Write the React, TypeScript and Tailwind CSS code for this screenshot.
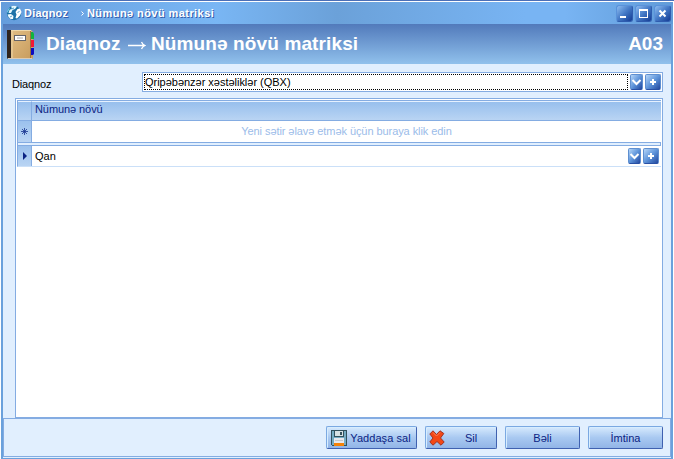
import type { ReactNode } from "react";

const glossy = "bg-linear-to-br from-[#b5d6f8] via-[#5e94da] to-[#24489f]";

function WindowButton({ children }: { children: ReactNode }) {
  return (
    <div className="h-[17px] w-[17px] rounded-[3px] border border-[#2f5cae] border-t-[#5a92da] border-l-[#5a92da] bg-linear-to-br from-[#8dbcf0] via-[#4479c6] to-[#153b94]">
      <svg width="15" height="15" viewBox="0 0 15 15" fill="none" stroke="#fff" shapeRendering="crispEdges">
        {children}
      </svg>
    </div>
  );
}

function EditorButtons() {
  return (
    <div className="flex shrink-0 gap-[2px]">
      <div className={`h-4 w-[13px] rounded-[2px] border border-[#5f8fd0] border-b-[#2850a5] ${glossy}`}>
        <svg width="11" height="14" viewBox="0 0 11 14" fill="none" stroke="#fff" strokeWidth="2">
          <path d="M1.5 5L5.5 9L9.5 5" />
        </svg>
      </div>
      <div className={`h-4 w-4 rounded-[2px] border border-[#5f8fd0] border-b-[#2850a5] ${glossy}`}>
        <svg width="14" height="14" viewBox="0 0 14 14" fill="#fff" shapeRendering="crispEdges">
          <path d="M6 4h2v2h2v2H8v2H6V8H4V6h2z" />
        </svg>
      </div>
    </div>
  );
}

function GlobeIcon() {
  return (
    <svg width="16" height="16" viewBox="0 0 16 16">
      <circle cx="8" cy="8" r="7.2" fill="#1c72a8" />
      <path d="M5 1.5Q8 0 11 1.5L9 4L6.5 5L5 8L2.5 8L3.5 5L6 3.5z" fill="#e4f7fd" />
      <path d="M11.5 4L14 3.5L15.5 7L14 10.5L11 13.5L9.5 13L10.5 9.5L9.5 7z" fill="#fff" />
      <path d="M1.5 9.5L5 9L7.5 11L7 14L4.5 14L2.5 12z" fill="#f2fbff" />
      <path d="M1 6L2.5 3.5L4 3L2.5 6L1 8z" fill="#73c5e5" />
      <path d="M5.5 4L8 3M11.5 8L13.5 6M4 12l2-1" stroke="#3a8fc0" strokeWidth=".8" />
    </svg>
  );
}

function BookIcon() {
  return (
    <svg width="28" height="31" viewBox="0 0 28 31">
      <defs>
        <linearGradient id="cover" x1="0" y1="0" x2="1" y2="1">
          <stop offset="0" stopColor="#e1bd84" />
          <stop offset="1" stopColor="#c79b5c" />
        </linearGradient>
      </defs>
      <path d="M0 1H4V30H1L0 29z" fill="#30241c" />
      <path d="M4 1H24L26 3V29L25 30H4z" fill="url(#cover)" />
      <path d="M4 1.5H24M5 2V29" stroke="#f0d8a9" fill="none" />
      <path d="M1 29.5H25" stroke="#dccbb4" />
      <path d="M23.5 2V29" stroke="#97713e" />
      <rect x="7" y="6" width="12" height="6" fill="#656468" />
      <rect x="8" y="7" width="10" height="4" fill="#fff" />
      <path d="M10 9H16" stroke="#a6a6a9" />
      <path d="M24 3h2l1 2v5h-3z" fill="#10b53c" />
      <path d="M24 11h3v7h-3z" fill="#f21835" />
      <path d="M24 19h3v6l-1 1h-2z" fill="#0c0cc0" />
    </svg>
  );
}

function SaveIcon() {
  return (
    <svg width="16" height="16" viewBox="0 0 16 16" shapeRendering="crispEdges">
      <path d="M0 0H15L16 1V16H1L0 15z" fill="#31515e" />
      <path d="M1 1H3V15H1zM13 1H15V15H13z" fill="#75acc4" />
      <path d="M3 7H13V8H3z" fill="#75acc4" />
      <path d="M4 1H12V6H4z" fill="#d7e2e5" />
      <path d="M9 2H11V5H9z" fill="#35535e" />
      <path d="M3 8H13V13H3z" fill="#e8e9ee" />
      <path d="M4 10H12V11H4z" fill="#c4c8ce" />
      <path d="M3 13H13V16H3z" fill="#f58208" />
    </svg>
  );
}

function DeleteIcon() {
  return (
    <svg width="16" height="16" viewBox="0 0 16 16">
      <path d="M4 .8L7.5 4.5L11 .8L14.8 3.5L11.5 8L15.2 12L12 15.2L8 11.5L4 15.2L.8 12L4 8L.8 4z" fill="#f34716" stroke="#a03222" strokeWidth="1" strokeLinejoin="round" />
      <path d="M4 2.5L7.5 6L11 2.5" stroke="#ff8055" fill="none" />
    </svg>
  );
}

function ActionButton({ width, children }: { width: string; children: ReactNode }) {
  return (
    <button className={`${width} flex h-[23px] items-center justify-center rounded-[2px] border border-t-[#7ba9e2] border-r-[#3f61b0] border-b-[#3f61b0] border-l-[#7ba9e2] bg-linear-to-b from-[#d7eafd] via-[#a9c9f1] to-[#92b5e7] text-[#0b2383] shadow-[inset_1px_1px_0_#d7edff]`}>
      {children}
    </button>
  );
}

export default function App() {
  return (
    <div className="flex h-[459px] w-[674px] flex-col overflow-hidden border-t border-[#4b6fb7] bg-white px-px font-['Liberation_Sans',Arial,sans-serif] text-[11px] leading-[14px] text-black">
      <div className="mt-px flex h-[22px] shrink-0 items-center bg-[linear-gradient(90deg,#659ddc_0%,#79b6f4_32%,#6ba1d9_50%,#78b4f3_78%,#78b4f3_84%,#619bd8_100%)] pr-[2px] pl-[5px]">
        <GlobeIcon />
        <h1 className="ml-[2px] flex whitespace-pre text-[11px] font-bold text-white [text-shadow:1px_1px_0_#365dab]">
          <span className="w-[57px] tracking-[0.2px]">Diaqnoz</span>
          <svg width="6" height="14" viewBox="0 0 6 14" fill="none" stroke="#fff"><path d="M.5 5.5L2.5 7.5L.5 9.5" /></svg>
          <span className="tracking-[0.43px]">Nümunə növü matriksi</span>
        </h1>
        <div className="ml-auto flex gap-[2px]">
          <WindowButton><path d="M3 11H9" strokeWidth="2" /></WindowButton>
          <WindowButton><path d="M3 4H12" strokeWidth="2" /><path d="M3.5 4V11.5H11.5V4" /></WindowButton>
          <WindowButton><path d="M4.5 4.5L10.5 10.5M10.5 4.5L4.5 10.5" strokeWidth="2" shapeRendering="auto" /></WindowButton>
        </div>
      </div>

      <div className="flex min-h-0 grow flex-col border-x-2 border-b border-[#6aa1dc] bg-[#e1effe]">
        <header className="flex h-10 shrink-0 items-center bg-linear-to-b from-[#527abb] to-[#91c1ec] pr-[8px] pl-[4px] text-white">
          <BookIcon />
          <h2 className="ml-[11px] flex items-center text-[19px] leading-6 font-bold whitespace-nowrap">
            <span className="w-[82px] tracking-[0.1px]">Diaqnoz</span>
            <svg width="18" height="12" viewBox="0 0 18 12" fill="none" stroke="#fff" strokeWidth="1.3"><path d="M0 7.5H17M13.5 4Q14.5 6.5 17 7.5Q14.5 8.5 13.5 11" /></svg>
            <span className="ml-[5px] tracking-[0.12px]">Nümunə növü matriksi</span>
          </h2>
          <span className="ml-auto text-[19px] font-bold">A03</span>
        </header>

        <div className="mt-2 flex h-5 shrink-0 pr-2 pl-[9px]">
          <label className="w-[130px] pt-[5px] tracking-[-0.15px]">Diaqnoz</label>
          <div className="flex grow border border-[#84ace2] bg-white p-px">
            <div className="mr-[2px] flex grow items-center border border-dotted border-black tracking-[-0.02px]">Qripəbənzər xəstəliklər (QBX)</div>
            <EditorButtons />
          </div>
        </div>

        <main className="mt-[6px] mr-2 ml-3 flex h-[321px] shrink-0 flex-col border border-b-2 border-[#84ace2] bg-white p-px text-[#0b2383]">
          <div className="flex h-[21px] shrink-0 border-y border-l border-[#84ace2]">
            <div className="w-[14px] border-t border-r border-t-[#e5f1ff] border-r-[#84ace2] bg-linear-to-b from-[#97bfed] to-[#b9d4f3]" />
            <div className="grow border-t border-[#e5f1ff] bg-linear-to-b from-[#97bfed] to-[#b9d4f3] pl-[3px] tracking-[-0.08px]">Nümunə növü</div>
          </div>
          <div className="flex h-[22px] shrink-0 border-b border-l border-[#84ace2]">
            <div className="flex w-[14px] items-center justify-center border-r border-[#84ace2] bg-linear-to-b from-[#9bc1ed] to-[#b9d4f3]">
              <svg width="7" height="7" viewBox="0 0 7 7" stroke="#16328e"><path d="M3.5 0V7M0 3.5H7M1 1L6 6M6 1L1 6" strokeWidth=".8" /></svg>
            </div>
            <div className="flex grow items-center justify-center pb-px tracking-[-0.07px] text-[#9bbce9]">Yeni sətir əlavə etmək üçün buraya klik edin</div>
          </div>
          <div className="h-[3px] shrink-0 border-x border-b border-[#84ace2] bg-[#e1effe]" />
          <div className="flex h-[21px] shrink-0 border-b border-l border-b-[#cbe0f8] border-l-[#84ace2] text-black">
            <div className="flex w-[14px] items-center justify-center border-r border-[#84ace2] bg-linear-to-b from-[#9bc1ed] to-[#b9d4f3]">
              <svg width="4" height="8" viewBox="0 0 4 8" fill="#0b2383"><path d="M0 0L4 4L0 8z" /></svg>
            </div>
            <div className="flex grow items-center justify-between pr-[2px] pl-[3px]"><span>Qan</span><EditorButtons /></div>
          </div>
        </main>

        <footer className="-mt-px flex h-[39px] items-start justify-end gap-2 border border-[#84ace2] pt-[7px] pr-[7px]">
          <ActionButton width="w-[91px]"><span className="mr-[3px]"><SaveIcon /></span><span className="pr-px tracking-[0.05px]">Yaddaşa sal</span></ActionButton>
          <ActionButton width="w-[72px]"><span className="mr-5"><DeleteIcon /></span><span className="mr-4">Sil</span></ActionButton>
          <ActionButton width="w-[75px]">Bəli</ActionButton>
          <ActionButton width="w-[75px]">İmtina</ActionButton>
        </footer>
      </div>
    </div>
  );
}
